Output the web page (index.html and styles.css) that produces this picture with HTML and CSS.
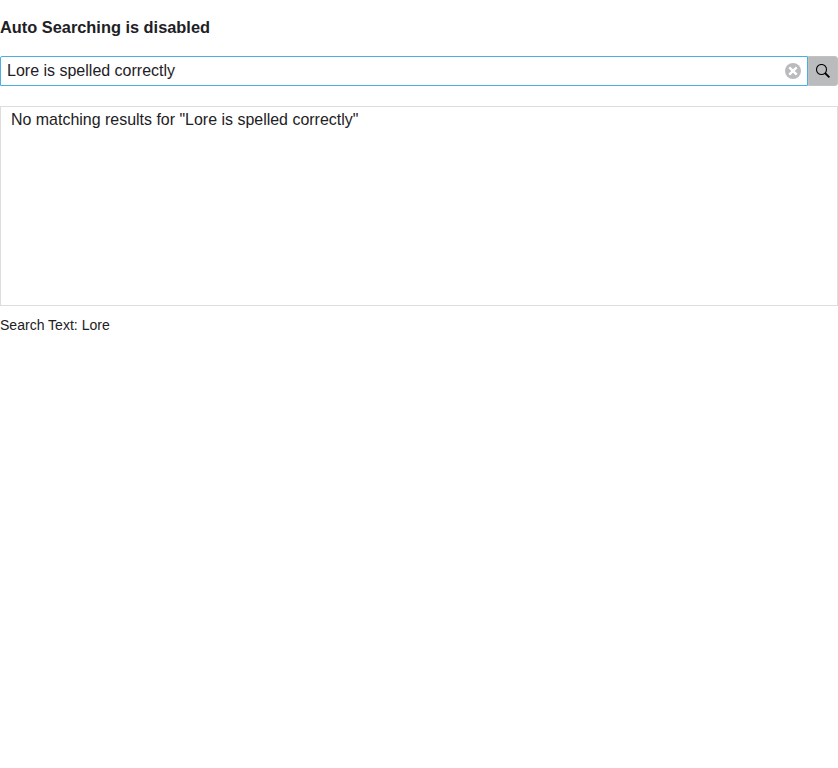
FILE: index.html
```html
<!DOCTYPE html>
<html lang="en">
<head>
<meta charset="utf-8">
<title>Search</title>
<link rel="stylesheet" href="styles.css">
</head>
<body>
<h4 class="title">Auto Searching is disabled</h4>
<div class="search">
  <div class="field">
    <span class="value">Lore is spelled correctly</span>
    <svg class="clear" viewBox="0 0 16 16"><circle cx="8" cy="8" r="8"/><path d="M4.3 4.3l7.4 7.4M11.7 4.3l-7.4 7.4"/></svg>
  </div>
  <div class="button">
    <svg class="glass" viewBox="0 0 14 14"><circle cx="5.5" cy="5.5" r="5"/><path d="M9 9l4.4 4.4"/></svg>
  </div>
</div>
<div class="results">No matching results for "Lore is spelled correctly"</div>
<div class="status">Search Text: Lore</div>
</body>
</html>
```
FILE: styles.css
```css
* { box-sizing: border-box; }
body { margin: 0; background: #fff; color: #1d2125; font: 14px/20px "Liberation Sans", Arial, sans-serif; }
.title { margin: 0; padding: 17px 0 19px; font-size: 16.38px; line-height: 20px; }
.search { display: flex; height: 30px; }
.field { flex: 1; display: flex; align-items: center; justify-content: space-between; padding: 0 6px; border: 1px solid #4bafe3; border-radius: 2px 0 0 0; font-size: 16px; }
.clear { width: 16px; height: 16px; fill: #b9bbbc; }
.clear path { stroke: #fff; stroke-width: 2.4; }
.button { width: 30px; display: flex; align-items: center; justify-content: center; background: #b9bbbc; border: 1px solid #c0c1c2; border-radius: 0 3px 3px 0; }
.glass { width: 14px; height: 14px; fill: none; stroke: #000; stroke-width: 1.1; }
.glass path { stroke-width: 1.8; }
.results { height: 200px; margin-top: 20px; padding: 3px 10px; border: 1px solid #ddd; font-size: 15.96px; line-height: 20px; }
.status { margin-top: 9px; font-size: 14.04px; }
```
